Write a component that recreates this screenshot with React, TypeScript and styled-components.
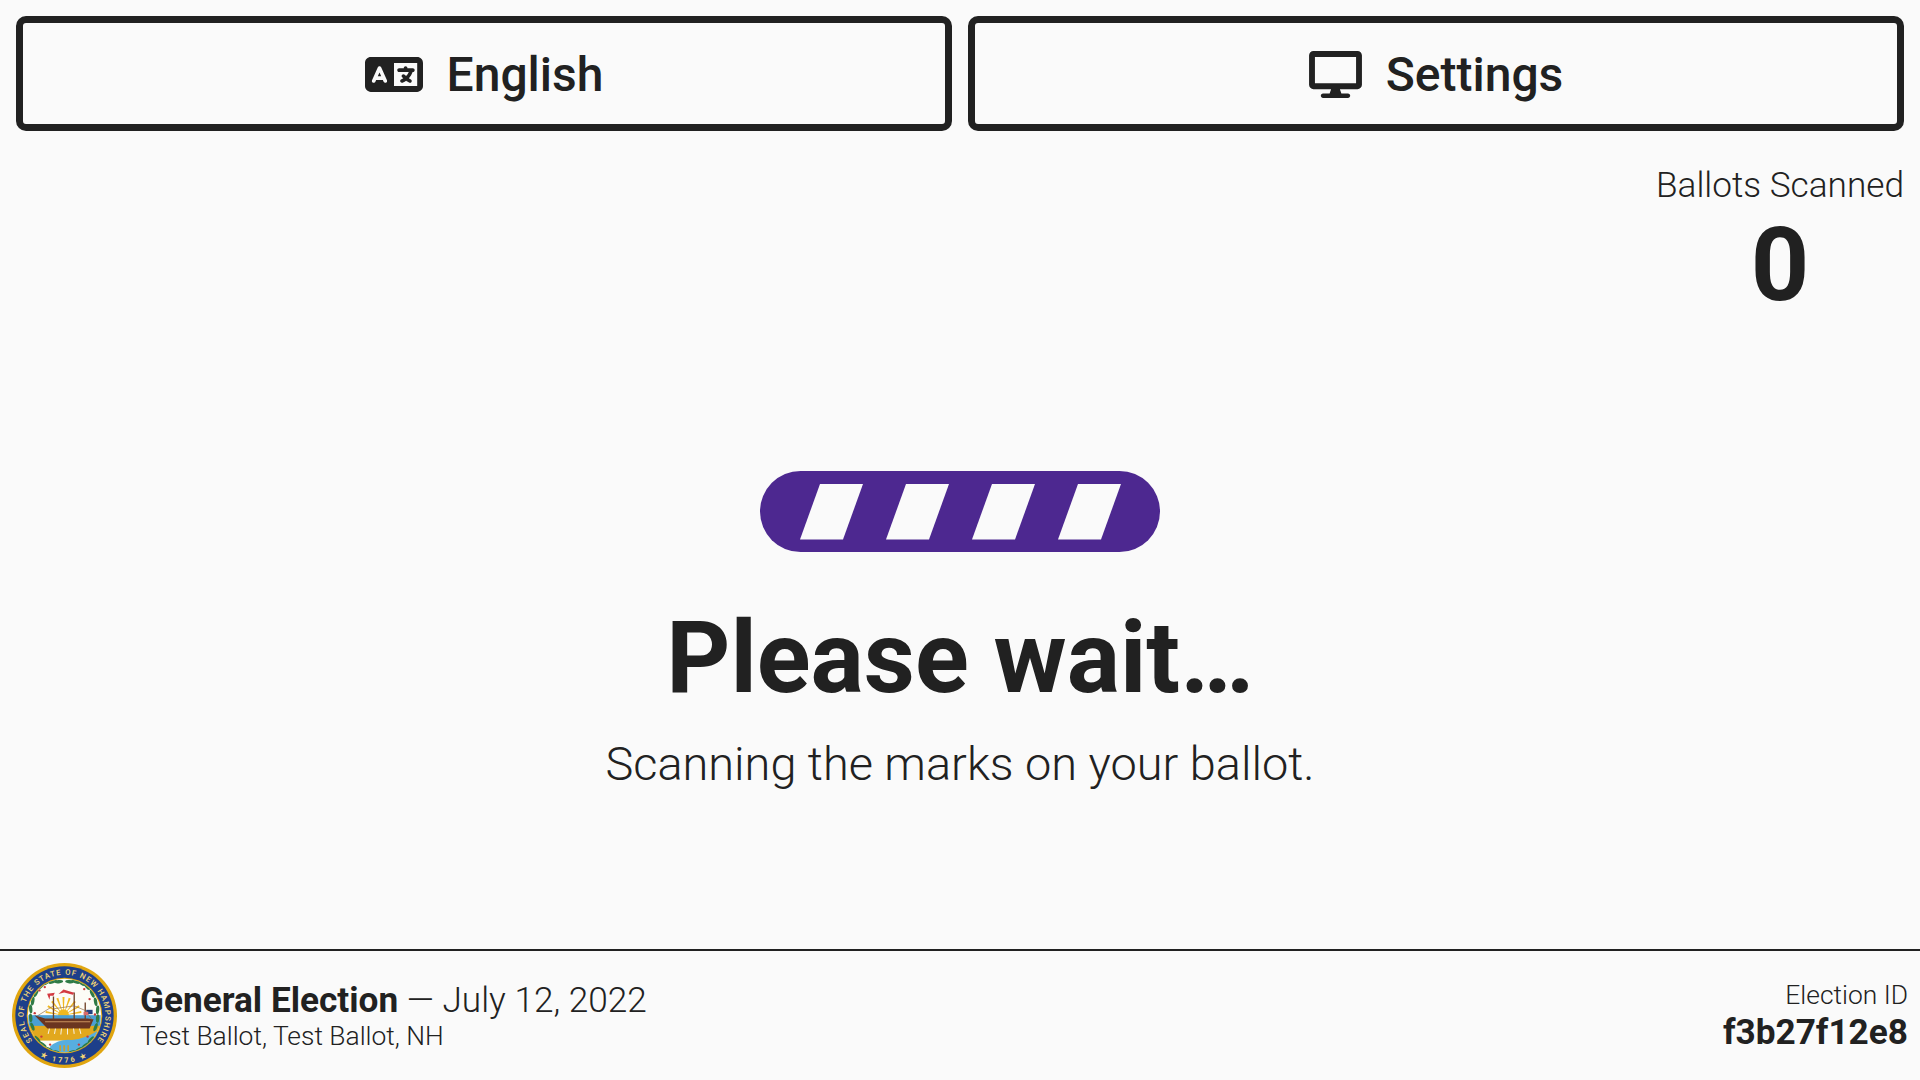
import React from 'react'
import styled, { createGlobalStyle } from 'styled-components'
import { FaDesktop } from 'react-icons/fa'
import { FaLanguage } from 'react-icons/fa6'

const GlobalStyle = createGlobalStyle`
  html, body {
    margin: 0;
    padding: 0;
    background: #fafafa;
  }
  * {
    box-sizing: border-box;
  }
`

const Screen = styled.div`
  display: flex;
  flex-direction: column;
  width: 100%;
  height: 100vh;
  overflow: hidden;
  background: #fafafa;
  color: #212121;
  font-family: Roboto, 'Liberation Sans', sans-serif;
`

const Toolbar = styled.div`
  display: grid;
  grid-template-columns: 1fr 1fr;
  gap: 16px;
  padding: 16px 16px 0;
`

const ToolbarButton = styled.button<{ $iconWidth: number }>`
  display: flex;
  align-items: center;
  justify-content: center;
  gap: 24px;
  height: 115px;
  padding: 2px 0 0;
  border: 7px solid #212121;
  border-radius: 10px;
  background: #fafafa;
  color: #212121;
  font-family: inherit;
  font-size: 48px;
  font-weight: 500;
  line-height: 1;

  svg {
    width: ${(p) => p.$iconWidth}px;
    height: 47px;
  }
`

const Body = styled.main`
  flex: 1;
  display: flex;
  flex-direction: column;
  min-height: 0;
`

const CounterRow = styled.div`
  display: flex;
  justify-content: flex-end;
  padding: 30px 16px 0;
`

const Counter = styled.div`
  text-align: center;
`

const CounterLabel = styled.div`
  font-size: 35.2px;
  font-weight: 300;
  line-height: 48px;
`

const CounterValue = styled.div`
  font-size: 102px;
  font-weight: 700;
  line-height: 112px;
`

const Message = styled.div`
  flex: 1;
  display: flex;
  flex-direction: column;
  align-items: center;
  justify-content: center;
  padding-bottom: 5px;
`

const Spinner = styled.svg`
  display: block;
  width: 400px;
  height: 81px;
`

const Heading = styled.h1`
  margin: 46px 0 0;
  font-size: 99.6px;
  font-weight: 700;
  line-height: 120px;
`

const Subheading = styled.p`
  margin: 16px 0 0;
  font-size: 46.9px;
  font-weight: 300;
  line-height: 60px;
`

const Footer = styled.footer`
  display: flex;
  align-items: center;
  justify-content: space-between;
  height: 131px;
  padding: 0 12px;
  border-top: 2px solid #212121;
`

const ElectionInfo = styled.div`
  display: flex;
  align-items: center;
  gap: 23px;
`

const Seal = styled.svg`
  display: block;
  width: 105px;
  height: 105px;
`

const ElectionTitle = styled.div`
  font-size: 35.2px;
  font-weight: 300;
  line-height: 41px;

  strong {
    font-weight: 700;
  }
`

const ElectionPlace = styled.div`
  font-size: 26.4px;
  font-weight: 300;
  line-height: 30px;
`

const ElectionId = styled.div`
  text-align: right;
`

const ElectionIdLabel = styled.div`
  font-size: 26.4px;
  font-weight: 300;
  line-height: 32px;
`

const ElectionIdValue = styled.div`
  padding-top: 1px;
  font-size: 35.2px;
  font-weight: 700;
  line-height: 40px;
`

const leaves: [number, number, number][] = [
  [124, 136, -45], [140, 126, -35], [158, 124, -20], [176, 124, -5],
  [108, 158, -65], [98, 182, -80], [92, 205, -95], [92, 232, 85], [97, 258, 70],
  [112, 296, 50], [128, 312, 35], [146, 326, 25], [166, 334, 10],
  [208, 124, 5], [226, 124, 20], [244, 128, 35], [260, 138, 50],
  [276, 160, 65], [286, 184, 80], [292, 208, 95], [292, 234, 95], [286, 260, 110],
  [272, 298, 130], [256, 314, 145], [238, 326, 155], [218, 334, 170],
]

const berries: [number, number][] = [
  [118, 150], [134, 140], [252, 146], [268, 176], [104, 218], [284, 222], [124, 288], [150, 312], [262, 288], [236, 312],
]

const rays = [-80, -60, -40, -20, 0, 20, 40, 60, 80]

function StateSeal() {
  return (
    <Seal viewBox="36 68 314 314">
      <defs>
        <path id="sealTop" d="M 193 347 A 122 122 0 1 1 193.1 347" />
        <path id="sealBottom" d="M 52 225 A 141 141 0 0 0 334 225" />
        <clipPath id="sealInner">
          <circle cx="193" cy="225" r="110" />
        </clipPath>
      </defs>
      <circle cx="193" cy="225" r="157" fill="#e0a50f" />
      <circle cx="193" cy="225" r="147" fill="#1d3f8a" />
      <circle cx="193" cy="225" r="113" fill="#e0a50f" />
      <circle cx="193" cy="225" r="110" fill="#fcfcf6" />
      <text fontFamily="Roboto, sans-serif" fontSize="23" fontWeight="500" fill="#f2d675" letterSpacing="3.2">
        <textPath href="#sealTop" startOffset="50%" textAnchor="middle">SEAL OF THE STATE OF NEW HAMPSHIRE</textPath>
      </text>
      <text fontFamily="Roboto, sans-serif" fontSize="22" fontWeight="700" fill="#f2d675" letterSpacing="7">
        <textPath href="#sealBottom" startOffset="50%" textAnchor="middle">★ 1776 ★</textPath>
      </text>
      <g clipPath="url(#sealInner)">
        {rays.map((a) => (
          <path key={a} d="M190 224 L187 170 L193 170 Z" fill="#f1b81f" transform={`rotate(${a} 190 224)`} />
        ))}
        <circle cx="190" cy="222" r="16" fill="#f1b81f" />
        <rect x="85" y="224" width="216" height="34" fill="#4a9fd4" />
        <rect x="85" y="256" width="216" height="44" fill="#e2a81e" />
        <path d="M150 318 Q175 294 215 298 Q255 294 290 272 L290 345 L150 345 Z" fill="#57aee0" />
        <path d="M103 224 L135 234 L262 234 L280 236 L268 264 L142 264 Z" fill="#6b3520" />
        <path d="M135 244 L270 244" stroke="#c9925c" strokeWidth="3" />
        <g stroke="#f6f1e6" strokeWidth="3">
          <path d="M148 264 L144 280 M166 264 L163 280 M184 264 L182 282 M202 264 L202 282 M220 264 L222 280 M238 264 L242 280" />
        </g>
        <g stroke="#6f4229" strokeWidth="4">
          <path d="M160 236 L160 168 M222 236 L222 156 M255 238 L255 186" />
        </g>
        <g stroke="#8f6b45" strokeWidth="2">
          <path d="M112 226 L160 196 M160 205 L222 196 L255 210 L276 238" fill="none" />
        </g>
        <path d="M141 160 L164 157 L160 166 L150 166 L148 178 Z" fill="#d33a41" />
        <path d="M175 161 L190 147 L222 157 L218 163 L192 156 Z" fill="#d33a41" />
        <rect x="258" y="208" width="19" height="13" fill="#24407f" />
        <rect x="250" y="214" width="14" height="10" fill="#d96a6a" />
        {leaves.map(([x, y, r]) => (
          <ellipse key={`${x}-${y}`} cx={x} cy={y} rx="13" ry="5" fill="#2f7b45" transform={`rotate(${r} ${x} ${y})`} />
        ))}
        {berries.map(([x, y]) => (
          <circle key={`${x}-${y}`} cx={x} cy={y} r="3.5" fill="#c93a3a" />
        ))}
        <path d="M180 314 L180 332 M192 314 L192 332 M204 314 L204 332" stroke="#c8a030" strokeWidth="5" />
      </g>
    </Seal>
  )
}

export default function App() {
  return (
    <Screen>
      <GlobalStyle />
      <Toolbar>
        <ToolbarButton $iconWidth={58}>
          <FaLanguage />
          English
        </ToolbarButton>
        <ToolbarButton $iconWidth={53}>
          <FaDesktop />
          Settings
        </ToolbarButton>
      </Toolbar>
      <Body>
        <CounterRow>
          <Counter>
            <CounterLabel>Ballots Scanned</CounterLabel>
            <CounterValue>0</CounterValue>
          </Counter>
        </CounterRow>
        <Message>
          <Spinner viewBox="0 0 400 81">
            <rect width="400" height="81" rx="40.5" fill="#4d2890" />
            {[0, 86, 172, 258].map((x) => (
              <polygon
                key={x}
                points={`${60 + x},13 ${103 + x},13 ${83 + x},68.5 ${40 + x},68.5`}
                fill="#fafafa"
              />
            ))}
          </Spinner>
          <Heading>Please wait…</Heading>
          <Subheading>Scanning the marks on your ballot.</Subheading>
        </Message>
      </Body>
      <Footer>
        <ElectionInfo>
          <StateSeal />
          <div>
            <ElectionTitle>
              <strong>General Election</strong> — July 12, 2022
            </ElectionTitle>
            <ElectionPlace>Test Ballot, Test Ballot, NH</ElectionPlace>
          </div>
        </ElectionInfo>
        <ElectionId>
          <ElectionIdLabel>Election ID</ElectionIdLabel>
          <ElectionIdValue>f3b27f12e8</ElectionIdValue>
        </ElectionId>
      </Footer>
    </Screen>
  )
}
